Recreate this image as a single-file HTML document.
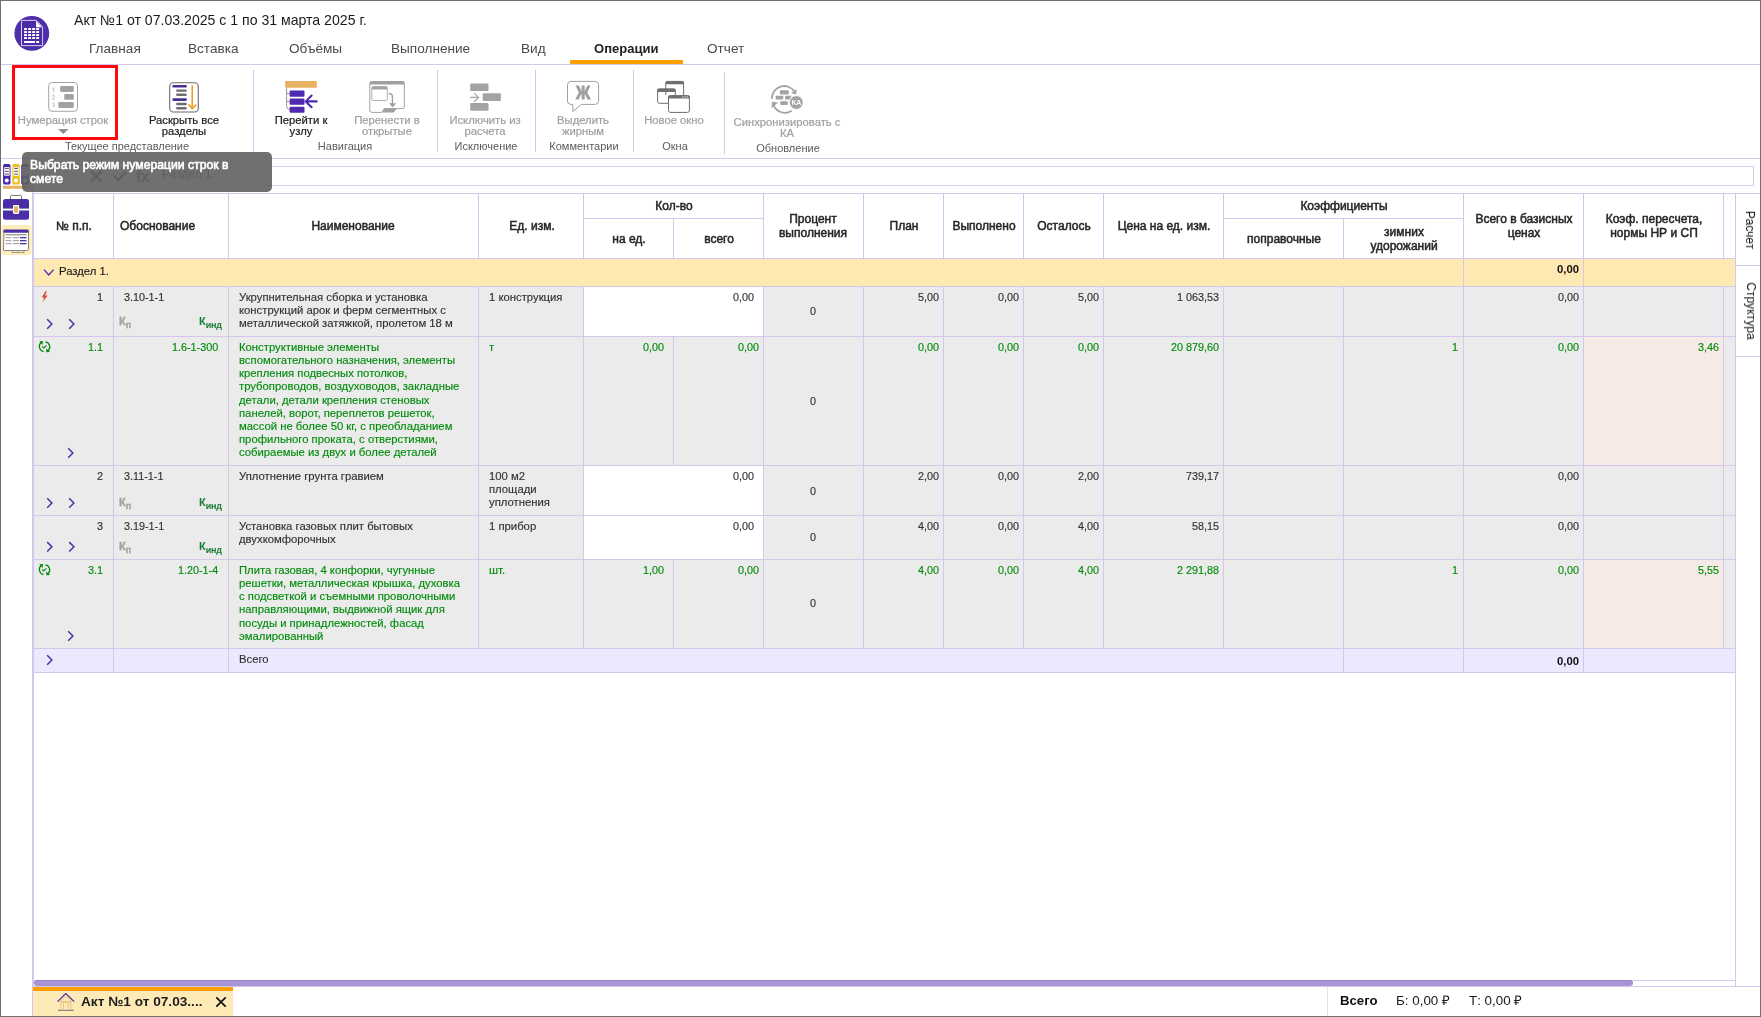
<!DOCTYPE html><html><head><meta charset="utf-8"><style>
html,body{margin:0;padding:0;}
body{width:1761px;height:1017px;position:relative;overflow:hidden;background:#fff;font-family:"Liberation Sans",sans-serif;}
.t{position:absolute;white-space:nowrap;will-change:transform;}
.r{position:absolute;}
svg{position:absolute;overflow:visible;}
</style></head><body>
<svg style="left:0;top:0" width="60" height="60" viewBox="0 0 60 60">
<circle cx="31.8" cy="33.4" r="17.4" fill="#4e2eaa"/>
<path d="M21.5 20.4 H36.4 L42.6 26.8 V45.6 H21.5 Z" fill="#4a2aa6" stroke="#d9d0f0" stroke-width="1"/>
<path d="M36 21 V27.2 H42.2 Z" fill="#fff"/>
<g fill="#fff">
<rect x="24" y="28" width="3" height="2" rx="0.5"/><rect x="28.1" y="28" width="3" height="2" rx="0.5"/><rect x="32.1" y="28" width="3" height="2" rx="0.5"/><rect x="36.1" y="28" width="3" height="2" rx="0.5"/>
<rect x="24" y="31" width="3" height="2" rx="0.5"/><rect x="28.1" y="31" width="3" height="2" rx="0.5"/><rect x="32.1" y="31" width="3" height="2" rx="0.5"/><rect x="36.1" y="31" width="3" height="2" rx="0.5"/>
<rect x="24" y="34" width="3" height="2" rx="0.5"/><rect x="28.1" y="34" width="3" height="2" rx="0.5"/><rect x="32.1" y="34" width="3" height="2" rx="0.5"/><rect x="36.1" y="34" width="3" height="2" rx="0.5"/>
<rect x="24" y="37" width="3" height="2" rx="0.5"/><rect x="28.1" y="37" width="3" height="2" rx="0.5"/><rect x="32.1" y="37" width="3" height="2" rx="0.5"/><rect x="36.1" y="37" width="3" height="2" rx="0.5"/>
<rect x="24" y="41" width="11" height="2" rx="0.5"/><rect x="36.1" y="41" width="3" height="2" rx="0.5"/>
</g></svg>
<div class="t" style="top:12.10px;font-size:14.1px;line-height:17.62px;font-weight:400;color:#1b1b1b;left:74px;">Акт №1 от 07.03.2025 с 1 по 31 марта 2025 г.</div>
<div class="t" style="top:39.79px;font-size:13.6px;line-height:17.0px;font-weight:400;color:#4a4a4a;left:88.5px;">Главная</div>
<div class="t" style="top:39.79px;font-size:13.6px;line-height:17.0px;font-weight:400;color:#4a4a4a;left:188px;">Вставка</div>
<div class="t" style="top:39.79px;font-size:13.6px;line-height:17.0px;font-weight:400;color:#4a4a4a;left:288.5px;">Объёмы</div>
<div class="t" style="top:39.79px;font-size:13.6px;line-height:17.0px;font-weight:400;color:#4a4a4a;left:390.5px;">Выполнение</div>
<div class="t" style="top:39.79px;font-size:13.6px;line-height:17.0px;font-weight:400;color:#4a4a4a;left:520.5px;">Вид</div>
<div class="t" style="top:39.79px;font-size:13.6px;line-height:17.0px;font-weight:400;color:#4a4a4a;left:706.8px;">Отчет</div>
<div class="t" style="top:40.82px;font-size:13.05px;line-height:16.31px;font-weight:700;color:#222;left:593.8px;">Операции</div>
<div class="r" style="left:570px;top:60px;width:113px;height:4px;background:#ff9f00;"></div>
<div class="r" style="left:1px;top:64px;width:1759px;height:1px;background:#d3c7ee;"></div>
<div class="r" style="left:12px;top:65px;width:100px;height:69px;border:3px solid #ff0a0a;"></div>
<div class="t" style="top:113.27px;font-size:11.25px;line-height:14.06px;font-weight:400;color:#a0a0a0;left:-17.0px;width:160px;text-align:center;-webkit-text-stroke:0.22px #a0a0a0;">Нумерация строк</div>
<svg style="left:58px;top:129px" width="11" height="5" viewBox="0 0 11 5"><path d="M0 0H10.5L5.25 5Z" fill="#8d8d8d"/></svg>
<div class="t" style="top:113.37px;font-size:11.25px;line-height:14.06px;font-weight:400;color:#222;left:104.0px;width:160px;text-align:center;-webkit-text-stroke:0.22px #222;">Раскрыть все</div>
<div class="t" style="top:123.97px;font-size:11.25px;line-height:14.06px;font-weight:400;color:#222;left:104.0px;width:160px;text-align:center;-webkit-text-stroke:0.22px #222;">разделы</div>
<div class="t" style="top:139.81px;font-size:11px;line-height:13.75px;font-weight:400;color:#5a5a5a;left:26.5px;width:200px;text-align:center;">Текущее представление</div>
<div class="r" style="left:253px;top:70px;width:1px;height:82px;background:#d3c7ee;"></div>
<div class="t" style="top:113.07px;font-size:11.25px;line-height:14.06px;font-weight:400;color:#222;left:221.0px;width:160px;text-align:center;-webkit-text-stroke:0.22px #222;">Перейти к</div>
<div class="t" style="top:123.67px;font-size:11.25px;line-height:14.06px;font-weight:400;color:#222;left:221.0px;width:160px;text-align:center;-webkit-text-stroke:0.22px #222;">узлу</div>
<div class="t" style="top:113.07px;font-size:11.25px;line-height:14.06px;font-weight:400;color:#a0a0a0;left:307.0px;width:160px;text-align:center;-webkit-text-stroke:0.22px #a0a0a0;">Перенести в</div>
<div class="t" style="top:123.67px;font-size:11.25px;line-height:14.06px;font-weight:400;color:#a0a0a0;left:307.0px;width:160px;text-align:center;-webkit-text-stroke:0.22px #a0a0a0;">открытые</div>
<div class="t" style="top:139.71px;font-size:11px;line-height:13.75px;font-weight:400;color:#5a5a5a;left:245.0px;width:200px;text-align:center;">Навигация</div>
<div class="r" style="left:437px;top:70px;width:1px;height:82px;background:#d3c7ee;"></div>
<div class="t" style="top:113.07px;font-size:11.25px;line-height:14.06px;font-weight:400;color:#a0a0a0;left:405.0px;width:160px;text-align:center;-webkit-text-stroke:0.22px #a0a0a0;">Исключить из</div>
<div class="t" style="top:123.67px;font-size:11.25px;line-height:14.06px;font-weight:400;color:#a0a0a0;left:405.0px;width:160px;text-align:center;-webkit-text-stroke:0.22px #a0a0a0;">расчета</div>
<div class="t" style="top:139.71px;font-size:11px;line-height:13.75px;font-weight:400;color:#5a5a5a;left:386.0px;width:200px;text-align:center;">Исключение</div>
<div class="r" style="left:535px;top:70px;width:1px;height:82px;background:#d3c7ee;"></div>
<div class="t" style="top:113.07px;font-size:11.25px;line-height:14.06px;font-weight:400;color:#a0a0a0;left:503.0px;width:160px;text-align:center;-webkit-text-stroke:0.22px #a0a0a0;">Выделить</div>
<div class="t" style="top:123.67px;font-size:11.25px;line-height:14.06px;font-weight:400;color:#a0a0a0;left:503.0px;width:160px;text-align:center;-webkit-text-stroke:0.22px #a0a0a0;">жирным</div>
<div class="t" style="top:139.71px;font-size:11px;line-height:13.75px;font-weight:400;color:#5a5a5a;left:484.0px;width:200px;text-align:center;">Комментарии</div>
<div class="r" style="left:633px;top:70px;width:1px;height:82px;background:#d3c7ee;"></div>
<div class="t" style="top:113.07px;font-size:11.25px;line-height:14.06px;font-weight:400;color:#a0a0a0;left:593.5px;width:160px;text-align:center;-webkit-text-stroke:0.22px #a0a0a0;">Новое окно</div>
<div class="t" style="top:139.71px;font-size:11px;line-height:13.75px;font-weight:400;color:#5a5a5a;left:574.5px;width:200px;text-align:center;">Окна</div>
<div class="r" style="left:724px;top:72px;width:1px;height:82px;background:#d3c7ee;"></div>
<div class="t" style="top:114.77px;font-size:11.25px;line-height:14.06px;font-weight:400;color:#a0a0a0;left:707.0px;width:160px;text-align:center;-webkit-text-stroke:0.22px #a0a0a0;">Синхронизировать с</div>
<div class="t" style="top:125.67px;font-size:11.25px;line-height:14.06px;font-weight:400;color:#a0a0a0;left:707.0px;width:160px;text-align:center;-webkit-text-stroke:0.22px #a0a0a0;">КА</div>
<div class="t" style="top:141.61px;font-size:11px;line-height:13.75px;font-weight:400;color:#5a5a5a;left:688.0px;width:200px;text-align:center;">Обновление</div>
<div class="r" style="left:1px;top:158px;width:1759px;height:1px;background:#d3c7ee;"></div>
<svg style="left:0;top:0" width="900" height="160" viewBox="0 0 900 160">
<!-- numbering -->
<rect x="48.7" y="82.5" width="28.8" height="28.8" rx="3.2" fill="none" stroke="#9c9c9c" stroke-width="0.9"/>
<rect x="60.1" y="86" width="13.7" height="5.9" rx="1.3" fill="#a2a2a2"/>
<rect x="64.2" y="94.1" width="9.6" height="5.7" rx="1.3" fill="#a2a2a2"/>
<rect x="58.3" y="102" width="15.5" height="5.9" rx="1.3" fill="#a2a2a2"/>
<g fill="none" stroke="#a8a8a8" stroke-width="0.65" stroke-linecap="round" stroke-linejoin="round"><path d="M52.5 88.5 L53.7 87.6 V91.8"/><path d="M52.3 96 Q52.4 95 53.4 95 Q54.5 95 54.4 96 Q54.3 96.8 52.3 99.2 H54.7"/><path d="M52.3 103.2 Q52.8 102.6 53.6 102.7 Q54.5 102.8 54.4 103.7 Q54.2 104.6 53.2 104.6 Q54.7 104.7 54.6 105.7 Q54.4 106.8 53.3 106.8 Q52.6 106.8 52.2 106.3"/></g>
<!-- expand all -->
<rect x="169.7" y="82.8" width="28.6" height="29.2" rx="3.6" fill="none" stroke="#6b6b6f" stroke-width="1.1"/>
<g stroke-linecap="round" stroke-width="2.6">
<path d="M173.6 86.3 H185.6 M173.6 99.6 H185.6" stroke="#47308f"/>
<path d="M177.3 90.6 H185.6 M177.3 94.7 H185.6 M177.3 104 H185.6 M177.3 108.3 H185.6" stroke="#6d6d73" stroke-width="2.4"/>
</g>
<path d="M192.2 85.2 V108.6 M188.5 104.3 L192.2 108.6 L196.2 104.6" fill="none" stroke="#f29b17" stroke-width="1.5"/>
<!-- go to node -->
<rect x="285.1" y="81.1" width="31.8" height="6.7" rx="0.8" fill="#e8b263"/>
<path d="M286.6 87.8 V106 Q286.6 109.5 290 109.6 M286.6 93.5 L289.6 93.5 M286.6 101.5 L289.6 101.5" fill="none" stroke="#8a8a8a" stroke-width="0.9"/>
<rect x="289.6" y="90.4" width="14.9" height="6.3" rx="1" fill="#4f2ab0"/>
<rect x="289.6" y="98.6" width="14.9" height="6.1" rx="1" fill="#4f2ab0"/>
<rect x="289.6" y="106.7" width="14.9" height="6.1" rx="1" fill="#4f2ab0"/>
<path d="M316.7 101.4 H306.5 M311.6 95.6 L305.7 101.4 L311.6 107.2" fill="none" stroke="#4f2ab0" stroke-width="2.1" stroke-linecap="round" stroke-linejoin="round"/>
<!-- move to open -->
<path d="M369.8 84 Q369.8 81.5 372.3 81.5 H402 Q404.3 81.5 404.3 84 V107 Q404.3 108.6 402 108.6 H384.2 L381.6 112.4 H372.3 Q369.8 112.4 369.8 110 Z" fill="none" stroke="#a0a0a0" stroke-width="1"/>
<rect x="369.8" y="81.5" width="34.5" height="3" fill="#a0a0a0"/>
<path d="M382 112.6 L384.6 108.5 H397 L393.6 112.6 Z" fill="#a0a0a0"/>
<path d="M371.8 99 V88.5 Q371.8 86.6 373.8 86.6 H385.3 Q387.3 86.6 387.3 88.5 V99 Q387.3 100.5 385.6 100.5 H373.5 Q371.8 100.5 371.8 99 Z" fill="none" stroke="#a6a6a6" stroke-width="0.9"/>
<rect x="371.8" y="86.6" width="15.5" height="3" rx="1" fill="#a3a3a3"/>
<path d="M389.3 93.8 Q392.4 93.4 392.4 96.8 V104" fill="none" stroke="#a0a0a0" stroke-width="1.4" stroke-linecap="round"/>
<path d="M389 103.2 H396.3 L392.6 107.4 Z" fill="#a0a0a0"/>
<!-- exclude -->
<g fill="#a3a3a3"><rect x="470.2" y="83.5" width="18.3" height="7.6" rx="1.2"/><rect x="482.7" y="93.3" width="18.2" height="7.7" rx="1.2"/><rect x="470.2" y="103.1" width="18.3" height="7.7" rx="1.2"/></g>
<path d="M470.4 97.4 H478.6 M474.5 93.4 L478.6 97.4 L474.5 101.5" fill="none" stroke="#a3a3a3" stroke-width="1.2" stroke-linecap="round" stroke-linejoin="round"/>
<!-- bold comment -->
<path d="M571 81.4 H595.2 Q598.6 81.4 598.6 84.8 V101 Q598.6 104.4 595.2 104.4 H581.3 L572.9 111.6 V104.4 H571 Q567.5 104.4 567.5 101 V84.8 Q567.5 81.4 571 81.4 Z" fill="none" stroke="#a0a0a0" stroke-width="1"/>
<text x="0" y="0" transform="translate(583.1 99.2) scale(0.88 1)" text-anchor="middle" font-family="Liberation Sans" font-weight="bold" font-size="17.8" fill="#a0a0a0" stroke="#a0a0a0" stroke-width="0.9">Ж</text>
<!-- new window -->
<g fill="#fff" stroke="#6e6e6e" stroke-width="1">
<path d="M665.8 95 V83 Q665.8 81.4 667.5 81.4 H682 Q683.6 81.4 683.6 83 V95"/>
</g>
<rect x="665.6" y="81.2" width="18.2" height="3.1" rx="0.8" fill="#6e6e6e"/>
<path d="M657.6 101.5 V90.6 Q657.6 88.9 659.4 88.9 H673.6 Q675.3 88.9 675.3 90.6 V95.5 M668.3 103.3 H659.4 Q657.6 103.3 657.6 101.5" fill="none" stroke="#6e6e6e" stroke-width="1"/>
<rect x="657.4" y="88.8" width="18.1" height="3.1" rx="0.8" fill="#6e6e6e"/>
<path d="M668.5 110.3 V97.3 Q668.5 95.6 670.3 95.6 H687.8 Q689.4 95.6 689.4 97.3 V110.3 Q689.4 112.4 687.3 112.4 H670.6 Q668.5 112.4 668.5 110.3 Z" fill="none" stroke="#6e6e6e" stroke-width="1"/>
<rect x="668.3" y="95.4" width="21.3" height="3.1" rx="0.8" fill="#6e6e6e"/>
<g fill="#fff"><circle cx="682.8" cy="96.9" r="0.6"/><circle cx="685" cy="96.9" r="0.6"/><circle cx="687.2" cy="96.9" r="0.6"/></g>
<!-- sync KA -->
<g fill="none" stroke="#a3a3a3" stroke-width="1.8">
<path d="M771.9 98.8 A12.3 12.3 0 0 1 794.5 91.6"/>
<path d="M791.7 110.7 A12.3 12.3 0 0 1 773.5 105.2"/>
</g>
<path d="M796.9 89.1 L796 94.6 L791 92.9 Z" fill="#a3a3a3"/>
<path d="M771.2 108.2 L772.2 101.7 L778.2 102.6 Z" fill="#a3a3a3"/>
<g fill="#a3a3a3">
<rect x="779.9" y="90.2" width="8.9" height="4.3" rx="0.8"/>
<rect x="775.8" y="95.7" width="7.4" height="3.9" rx="0.6"/>
<path d="M785.2 95.7 H791.6 L789.5 99.6 H785.2 Z"/>
<rect x="780.3" y="101.2" width="7.5" height="3.7" rx="0.6"/>
</g>
<circle cx="796.3" cy="102.5" r="6.9" fill="#a3a3a3" stroke="#fff" stroke-width="0.9"/>
<text x="796.3" y="105" text-anchor="middle" font-family="Liberation Sans" font-weight="700" font-size="7" fill="#fff" letter-spacing="-0.3">KA</text>
</svg>
<div class="r" style="left:0px;top:0px;width:1761px;height:1px;background:#707070;"></div>
<div class="r" style="left:0px;top:1016px;width:1761px;height:1px;background:#707070;"></div>
<div class="r" style="left:0px;top:0px;width:1px;height:1017px;background:#707070;"></div>
<div class="r" style="left:1760px;top:0px;width:1px;height:1017px;background:#707070;"></div>
<div class="r" style="left:32px;top:158px;width:1px;height:858px;background:#d3c7ee;"></div>
<div class="r" style="left:33px;top:193px;width:1px;height:794px;background:#d3c7ee;"></div>
<div class="r" style="left:38.5px;top:165px;width:44px;height:19px;border:1px solid #d6ccef;box-sizing:border-box;"></div>
<div class="r" style="left:158px;top:166px;width:1596px;height:20px;border:1px solid #d6ccef;box-sizing:border-box;"></div>
<div class="t" style="top:166.84px;font-size:12px;line-height:15.0px;font-weight:400;color:#555;left:161.5px;">Раздел 1.</div>
<svg style="left:0;top:0" width="200" height="200" viewBox="0 0 200 200">
<path d="M91.2 171.2 L101.6 181.6 M101.6 171.2 L91.2 181.6" stroke="#5a5a5a" stroke-width="2.6"/>
<path d="M114.3 176 L118.3 180.3 L125.8 171.8" fill="none" stroke="#5a5a5a" stroke-width="2.4"/>
<text x="136" y="181.8" font-family="Liberation Sans" font-weight="700" font-size="16" fill="#5a5a5a" letter-spacing="-0.5">fx</text>
</svg>
<svg style="left:0;top:0" width="40" height="270" viewBox="0 0 40 270">
<rect x="3.1" y="164.1" width="7.4" height="20.4" rx="1.6" fill="#4a27a8"/>
<rect x="12.3" y="164.1" width="7.5" height="20.4" rx="1.6" fill="#ecc01e"/>
<rect x="21.2" y="164.1" width="7.5" height="20.4" rx="1.6" fill="#4a27a8"/>
<g fill="#fff"><rect x="4.2" y="167.1" width="5.4" height="8.6" rx="0.8"/><rect x="13.4" y="167.1" width="5.4" height="8.6" rx="0.8"/><rect x="22.3" y="167.1" width="5.4" height="8.6" rx="0.8"/>
<circle cx="6.8" cy="180.4" r="2"/><circle cx="16" cy="180.4" r="2"/><circle cx="24.9" cy="180.4" r="2"/></g>
<g fill="#3a3a3a"><rect x="5" y="167.9" width="3.8" height="0.9"/><rect x="5" y="170.8" width="3.8" height="0.9"/><rect x="5" y="173.6" width="3.8" height="0.9"/><rect x="14.2" y="167.9" width="3.8" height="0.9"/><rect x="14.2" y="170.8" width="3.8" height="0.9"/><rect x="14.2" y="173.6" width="3.8" height="0.9"/><rect x="23.1" y="167.9" width="3.8" height="0.9"/><rect x="23.1" y="170.8" width="3.8" height="0.9"/><rect x="23.1" y="173.6" width="3.8" height="0.9"/></g>
<rect x="3" y="185.8" width="26" height="3" rx="0.5" fill="#e8b263"/>
<path d="M10.5 199 V196.6 Q10.5 195.4 11.7 195.4 H20.3 Q21.5 195.4 21.5 196.6 V199" fill="none" stroke="#6a6a6a" stroke-width="0.9"/>
<rect x="3" y="199" width="26" height="20.7" rx="2.5" fill="#4b2da5"/>
<rect x="3" y="208.6" width="26" height="1.9" fill="#fff"/>
<rect x="13.6" y="205.6" width="5" height="7.8" rx="0.6" fill="#e8b263" stroke="#fff" stroke-width="1.1"/>
<rect x="1.5" y="225" width="30" height="30" rx="3" fill="#feebb8"/>
<path d="M4 231 H28.5 V248.5 Q28.5 250.5 26.5 250.5 H4 Q3.5 250.5 3.5 249 Z" fill="#fff" stroke="#777" stroke-width="0.9"/>
<rect x="3.5" y="229.5" width="25" height="3.3" rx="1" fill="#4b2da5"/>
<rect x="5.5" y="234.3" width="21" height="1" fill="#777"/>
<g fill="#aaa"><rect x="5.5" y="237" width="6" height="1.2"/><rect x="13" y="237" width="6" height="1.2"/><rect x="5.5" y="240" width="6" height="1.2"/><rect x="13" y="240" width="6" height="1.2"/><rect x="5.5" y="243" width="6" height="1.2"/><rect x="13" y="243" width="6" height="1.2"/></g>
<g fill="#4b2da5"><rect x="20" y="237" width="6.5" height="1.3"/><rect x="20" y="240" width="6.5" height="1.3"/><rect x="20" y="243" width="6.5" height="1.3"/></g>
<path d="M12 250.5 V252.5 H24 V250.5 M18 250.5 V252.5" fill="none" stroke="#888" stroke-width="0.8"/>
</svg>
<div class="r" style="left:34px;top:193px;width:1726px;height:1px;background:#d3c7ee;"></div>
<div class="r" style="left:34px;top:259px;width:1701px;height:27px;background:#fee9b3;"></div>
<div class="r" style="left:34px;top:287px;width:1701px;height:361px;background:#ebebeb;"></div>
<div class="r" style="left:584px;top:287px;width:179px;height:49px;background:#fff;"></div>
<div class="r" style="left:584px;top:466px;width:179px;height:49px;background:#fff;"></div>
<div class="r" style="left:584px;top:516px;width:179px;height:43px;background:#fff;"></div>
<div class="r" style="left:1584px;top:337px;width:139px;height:128px;background:#f5eae6;"></div>
<div class="r" style="left:1584px;top:560px;width:139px;height:88px;background:#f5eae6;"></div>
<div class="r" style="left:34px;top:649px;width:1701px;height:23px;background:#ece8fd;"></div>
<div class="r" style="left:34px;top:258px;width:1701px;height:1px;background:#d3c7ee;"></div>
<div class="r" style="left:34px;top:286px;width:1701px;height:1px;background:#d3c7ee;"></div>
<div class="r" style="left:34px;top:336px;width:1701px;height:1px;background:#d3c7ee;"></div>
<div class="r" style="left:34px;top:465px;width:1701px;height:1px;background:#d3c7ee;"></div>
<div class="r" style="left:34px;top:515px;width:1701px;height:1px;background:#d3c7ee;"></div>
<div class="r" style="left:34px;top:559px;width:1701px;height:1px;background:#d3c7ee;"></div>
<div class="r" style="left:34px;top:648px;width:1701px;height:1px;background:#d3c7ee;"></div>
<div class="r" style="left:34px;top:672px;width:1701px;height:1px;background:#d3c7ee;"></div>
<div class="r" style="left:584px;top:218px;width:179px;height:1px;background:#d3c7ee;"></div>
<div class="r" style="left:1224px;top:218px;width:239px;height:1px;background:#d3c7ee;"></div>
<div class="r" style="left:113px;top:194px;width:1px;height:64px;background:#d3c7ee;"></div>
<div class="r" style="left:113px;top:287px;width:1px;height:361px;background:#d3c7ee;"></div>
<div class="r" style="left:228px;top:194px;width:1px;height:64px;background:#d3c7ee;"></div>
<div class="r" style="left:228px;top:287px;width:1px;height:361px;background:#d3c7ee;"></div>
<div class="r" style="left:478px;top:194px;width:1px;height:64px;background:#d3c7ee;"></div>
<div class="r" style="left:478px;top:287px;width:1px;height:361px;background:#d3c7ee;"></div>
<div class="r" style="left:583px;top:194px;width:1px;height:64px;background:#d3c7ee;"></div>
<div class="r" style="left:583px;top:287px;width:1px;height:361px;background:#d3c7ee;"></div>
<div class="r" style="left:763px;top:194px;width:1px;height:64px;background:#d3c7ee;"></div>
<div class="r" style="left:763px;top:287px;width:1px;height:361px;background:#d3c7ee;"></div>
<div class="r" style="left:863px;top:194px;width:1px;height:64px;background:#d3c7ee;"></div>
<div class="r" style="left:863px;top:287px;width:1px;height:361px;background:#d3c7ee;"></div>
<div class="r" style="left:943px;top:194px;width:1px;height:64px;background:#d3c7ee;"></div>
<div class="r" style="left:943px;top:287px;width:1px;height:361px;background:#d3c7ee;"></div>
<div class="r" style="left:1023px;top:194px;width:1px;height:64px;background:#d3c7ee;"></div>
<div class="r" style="left:1023px;top:287px;width:1px;height:361px;background:#d3c7ee;"></div>
<div class="r" style="left:1103px;top:194px;width:1px;height:64px;background:#d3c7ee;"></div>
<div class="r" style="left:1103px;top:287px;width:1px;height:361px;background:#d3c7ee;"></div>
<div class="r" style="left:1223px;top:194px;width:1px;height:64px;background:#d3c7ee;"></div>
<div class="r" style="left:1223px;top:287px;width:1px;height:361px;background:#d3c7ee;"></div>
<div class="r" style="left:1343px;top:287px;width:1px;height:361px;background:#d3c7ee;"></div>
<div class="r" style="left:1463px;top:194px;width:1px;height:64px;background:#d3c7ee;"></div>
<div class="r" style="left:1463px;top:287px;width:1px;height:361px;background:#d3c7ee;"></div>
<div class="r" style="left:1583px;top:194px;width:1px;height:64px;background:#d3c7ee;"></div>
<div class="r" style="left:1583px;top:287px;width:1px;height:361px;background:#d3c7ee;"></div>
<div class="r" style="left:1723px;top:194px;width:1px;height:64px;background:#d3c7ee;"></div>
<div class="r" style="left:1723px;top:287px;width:1px;height:361px;background:#d3c7ee;"></div>
<div class="r" style="left:673px;top:219px;width:1px;height:39px;background:#d3c7ee;"></div>
<div class="r" style="left:673px;top:337px;width:1px;height:128px;background:#d3c7ee;"></div>
<div class="r" style="left:673px;top:560px;width:1px;height:88px;background:#d3c7ee;"></div>
<div class="r" style="left:1343px;top:219px;width:1px;height:39px;background:#d3c7ee;"></div>
<div class="r" style="left:113px;top:649px;width:1px;height:23px;background:#d3c7ee;"></div>
<div class="r" style="left:228px;top:649px;width:1px;height:23px;background:#d3c7ee;"></div>
<div class="r" style="left:1343px;top:649px;width:1px;height:23px;background:#d3c7ee;"></div>
<div class="r" style="left:1463px;top:649px;width:1px;height:23px;background:#d3c7ee;"></div>
<div class="r" style="left:1583px;top:649px;width:1px;height:23px;background:#d3c7ee;"></div>
<div class="r" style="left:1735px;top:193px;width:1px;height:794px;background:#d3c7ee;"></div>
<div class="r" style="left:1463px;top:259px;width:1px;height:27px;background:#d3c7ee;"></div>
<div class="r" style="left:1583px;top:259px;width:1px;height:27px;background:#d3c7ee;"></div>
<div class="t" style="top:219.34px;font-size:12.0px;line-height:15.0px;font-weight:400;color:#262626;left:-16.0px;width:180px;text-align:center;-webkit-text-stroke:0.5px #262626;">№ п.п.</div>
<div class="t" style="top:219.34px;font-size:12.0px;line-height:15.0px;font-weight:400;color:#262626;left:120.3px;-webkit-text-stroke:0.5px #262626;">Обоснование</div>
<div class="t" style="top:219.34px;font-size:12.0px;line-height:15.0px;font-weight:400;color:#262626;left:263.0px;width:180px;text-align:center;-webkit-text-stroke:0.5px #262626;">Наименование</div>
<div class="t" style="top:219.34px;font-size:12.0px;line-height:15.0px;font-weight:400;color:#262626;left:441.5px;width:180px;text-align:center;-webkit-text-stroke:0.5px #262626;">Ед. изм.</div>
<div class="t" style="top:199.34px;font-size:12.0px;line-height:15.0px;font-weight:400;color:#262626;left:584.0px;width:180px;text-align:center;-webkit-text-stroke:0.5px #262626;">Кол-во</div>
<div class="t" style="top:232.14px;font-size:12.0px;line-height:15.0px;font-weight:400;color:#262626;left:539.0px;width:180px;text-align:center;-webkit-text-stroke:0.5px #262626;">на ед.</div>
<div class="t" style="top:232.14px;font-size:12.0px;line-height:15.0px;font-weight:400;color:#262626;left:629.0px;width:180px;text-align:center;-webkit-text-stroke:0.5px #262626;">всего</div>
<div class="t" style="top:212.34px;font-size:12.0px;line-height:15.0px;font-weight:400;color:#262626;left:723.0px;width:180px;text-align:center;-webkit-text-stroke:0.5px #262626;">Процент</div>
<div class="t" style="top:226.14px;font-size:12.0px;line-height:15.0px;font-weight:400;color:#262626;left:723.0px;width:180px;text-align:center;-webkit-text-stroke:0.5px #262626;">выполнения</div>
<div class="t" style="top:219.34px;font-size:12.0px;line-height:15.0px;font-weight:400;color:#262626;left:814.0px;width:180px;text-align:center;-webkit-text-stroke:0.5px #262626;">План</div>
<div class="t" style="top:219.34px;font-size:12.0px;line-height:15.0px;font-weight:400;color:#262626;left:893.5px;width:180px;text-align:center;-webkit-text-stroke:0.5px #262626;">Выполнено</div>
<div class="t" style="top:219.34px;font-size:12.0px;line-height:15.0px;font-weight:400;color:#262626;left:973.5px;width:180px;text-align:center;-webkit-text-stroke:0.5px #262626;">Осталось</div>
<div class="t" style="top:219.34px;font-size:12.0px;line-height:15.0px;font-weight:400;color:#262626;left:1074.0px;width:180px;text-align:center;-webkit-text-stroke:0.5px #262626;">Цена на ед. изм.</div>
<div class="t" style="top:199.34px;font-size:12.0px;line-height:15.0px;font-weight:400;color:#262626;left:1253.5px;width:180px;text-align:center;-webkit-text-stroke:0.5px #262626;">Коэффициенты</div>
<div class="t" style="top:231.84px;font-size:12.0px;line-height:15.0px;font-weight:400;color:#262626;left:1193.5px;width:180px;text-align:center;-webkit-text-stroke:0.5px #262626;">поправочные</div>
<div class="t" style="top:225.34px;font-size:12.0px;line-height:15.0px;font-weight:400;color:#262626;left:1313.5px;width:180px;text-align:center;-webkit-text-stroke:0.5px #262626;">зимних</div>
<div class="t" style="top:238.84px;font-size:12.0px;line-height:15.0px;font-weight:400;color:#262626;left:1313.5px;width:180px;text-align:center;-webkit-text-stroke:0.5px #262626;">удорожаний</div>
<div class="t" style="top:212.34px;font-size:12.0px;line-height:15.0px;font-weight:400;color:#262626;left:1433.5px;width:180px;text-align:center;-webkit-text-stroke:0.5px #262626;">Всего в базисных</div>
<div class="t" style="top:226.14px;font-size:12.0px;line-height:15.0px;font-weight:400;color:#262626;left:1433.5px;width:180px;text-align:center;-webkit-text-stroke:0.5px #262626;">ценах</div>
<div class="t" style="top:212.34px;font-size:12.0px;line-height:15.0px;font-weight:400;color:#262626;left:1563.5px;width:180px;text-align:center;-webkit-text-stroke:0.5px #262626;">Коэф. пересчета,</div>
<div class="t" style="top:226.14px;font-size:12.0px;line-height:15.0px;font-weight:400;color:#262626;left:1563.5px;width:180px;text-align:center;-webkit-text-stroke:0.5px #262626;">нормы НР и СП</div>
<div class="t" style="top:264.12px;font-size:11.3px;line-height:14.12px;font-weight:400;color:#1a1a1a;left:59.2px;-webkit-text-stroke:0.15px #1a1a1a;">Раздел 1.</div>
<div class="t" style="top:262.42px;font-size:11.3px;line-height:14.12px;font-weight:700;color:#111;right:182.4000000000001px;text-align:right;">0,00</div>
<div class="t" style="top:290.81px;font-size:10.8px;line-height:13.5px;font-weight:400;color:#323232;right:1658px;text-align:right;-webkit-text-stroke:0.15px #323232;">1</div>
<div class="t" style="top:290.81px;font-size:10.8px;line-height:13.5px;font-weight:400;color:#323232;left:124px;-webkit-text-stroke:0.15px #323232;">3.10-1-1</div>
<div class="t" style="top:315.21px;font-size:11px;line-height:13.75px;font-weight:700;color:#a3a3a3;left:119px;-webkit-text-stroke:0.35px #a3a3a3;">К<span style="font-size:9px;position:relative;top:3px;letter-spacing:-0.2px">п</span></div>
<div class="t" style="top:315.21px;font-size:11px;line-height:13.75px;font-weight:700;color:#187b36;right:1539px;text-align:right;">К<span style="font-size:9px;position:relative;top:3px;letter-spacing:-0.25px">инд</span></div>
<div class="t" style="top:289.72px;font-size:11.3px;line-height:14.12px;font-weight:400;color:#323232;left:239px;-webkit-text-stroke:0.15px #323232;">Укрупнительная сборка и установка</div>
<div class="t" style="top:302.92px;font-size:11.3px;line-height:14.12px;font-weight:400;color:#323232;left:239px;-webkit-text-stroke:0.15px #323232;">конструкций арок и ферм сегментных с</div>
<div class="t" style="top:316.12px;font-size:11.3px;line-height:14.12px;font-weight:400;color:#323232;left:239px;-webkit-text-stroke:0.15px #323232;">металлической затяжкой, пролетом 18 м</div>
<div class="t" style="top:289.72px;font-size:11.3px;line-height:14.12px;font-weight:400;color:#323232;left:489.4px;-webkit-text-stroke:0.15px #323232;">1 конструкция</div>
<div class="t" style="top:290.81px;font-size:10.8px;line-height:13.5px;font-weight:400;color:#323232;right:1007.4px;text-align:right;-webkit-text-stroke:0.15px #323232;">0,00</div>
<div class="t" style="top:305.11px;font-size:10.8px;line-height:13.5px;font-weight:400;color:#323232;left:613.0px;width:400px;text-align:center;-webkit-text-stroke:0.15px #323232;">0</div>
<div class="t" style="top:290.81px;font-size:10.8px;line-height:13.5px;font-weight:400;color:#323232;right:821.8px;text-align:right;-webkit-text-stroke:0.15px #323232;">5,00</div>
<div class="t" style="top:290.81px;font-size:10.8px;line-height:13.5px;font-weight:400;color:#323232;right:742.4px;text-align:right;-webkit-text-stroke:0.15px #323232;">0,00</div>
<div class="t" style="top:290.81px;font-size:10.8px;line-height:13.5px;font-weight:400;color:#323232;right:662.2px;text-align:right;-webkit-text-stroke:0.15px #323232;">5,00</div>
<div class="t" style="top:290.81px;font-size:10.8px;line-height:13.5px;font-weight:400;color:#323232;right:542.2px;text-align:right;-webkit-text-stroke:0.15px #323232;">1 063,53</div>
<div class="t" style="top:290.81px;font-size:10.8px;line-height:13.5px;font-weight:400;color:#323232;right:182.4000000000001px;text-align:right;-webkit-text-stroke:0.15px #323232;">0,00</div>
<div class="t" style="top:340.81px;font-size:10.8px;line-height:13.5px;font-weight:400;color:#008c0c;right:1658px;text-align:right;-webkit-text-stroke:0.15px #008c0c;">1.1</div>
<div class="t" style="top:340.81px;font-size:10.8px;line-height:13.5px;font-weight:400;color:#008c0c;right:1542.5px;text-align:right;-webkit-text-stroke:0.15px #008c0c;">1.6-1-300</div>
<div class="t" style="top:339.72px;font-size:11.3px;line-height:14.12px;font-weight:400;color:#008c0c;left:239px;-webkit-text-stroke:0.15px #008c0c;">Конструктивные элементы</div>
<div class="t" style="top:352.92px;font-size:11.3px;line-height:14.12px;font-weight:400;color:#008c0c;left:239px;-webkit-text-stroke:0.15px #008c0c;">вспомогательного назначения, элементы</div>
<div class="t" style="top:366.12px;font-size:11.3px;line-height:14.12px;font-weight:400;color:#008c0c;left:239px;-webkit-text-stroke:0.15px #008c0c;">крепления подвесных потолков,</div>
<div class="t" style="top:379.32px;font-size:11.3px;line-height:14.12px;font-weight:400;color:#008c0c;left:239px;-webkit-text-stroke:0.15px #008c0c;">трубопроводов, воздуховодов, закладные</div>
<div class="t" style="top:392.52px;font-size:11.3px;line-height:14.12px;font-weight:400;color:#008c0c;left:239px;-webkit-text-stroke:0.15px #008c0c;">детали, детали крепления стеновых</div>
<div class="t" style="top:405.72px;font-size:11.3px;line-height:14.12px;font-weight:400;color:#008c0c;left:239px;-webkit-text-stroke:0.15px #008c0c;">панелей, ворот, переплетов решеток,</div>
<div class="t" style="top:418.92px;font-size:11.3px;line-height:14.12px;font-weight:400;color:#008c0c;left:239px;-webkit-text-stroke:0.15px #008c0c;">массой не более 50 кг, с преобладанием</div>
<div class="t" style="top:432.12px;font-size:11.3px;line-height:14.12px;font-weight:400;color:#008c0c;left:239px;-webkit-text-stroke:0.15px #008c0c;">профильного проката, с отверстиями,</div>
<div class="t" style="top:445.32px;font-size:11.3px;line-height:14.12px;font-weight:400;color:#008c0c;left:239px;-webkit-text-stroke:0.15px #008c0c;">собираемые из двух и более деталей</div>
<div class="t" style="top:339.72px;font-size:11.3px;line-height:14.12px;font-weight:400;color:#008c0c;left:489.4px;-webkit-text-stroke:0.15px #008c0c;">т</div>
<div class="t" style="top:340.81px;font-size:10.8px;line-height:13.5px;font-weight:400;color:#008c0c;right:1097.4px;text-align:right;-webkit-text-stroke:0.15px #008c0c;">0,00</div>
<div class="t" style="top:340.81px;font-size:10.8px;line-height:13.5px;font-weight:400;color:#008c0c;right:1002.4px;text-align:right;-webkit-text-stroke:0.15px #008c0c;">0,00</div>
<div class="t" style="top:394.81px;font-size:10.8px;line-height:13.5px;font-weight:400;color:#323232;left:613.0px;width:400px;text-align:center;-webkit-text-stroke:0.15px #323232;">0</div>
<div class="t" style="top:340.81px;font-size:10.8px;line-height:13.5px;font-weight:400;color:#008c0c;right:821.8px;text-align:right;-webkit-text-stroke:0.15px #008c0c;">0,00</div>
<div class="t" style="top:340.81px;font-size:10.8px;line-height:13.5px;font-weight:400;color:#008c0c;right:742.4px;text-align:right;-webkit-text-stroke:0.15px #008c0c;">0,00</div>
<div class="t" style="top:340.81px;font-size:10.8px;line-height:13.5px;font-weight:400;color:#008c0c;right:662.2px;text-align:right;-webkit-text-stroke:0.15px #008c0c;">0,00</div>
<div class="t" style="top:340.81px;font-size:10.8px;line-height:13.5px;font-weight:400;color:#008c0c;right:542.2px;text-align:right;-webkit-text-stroke:0.15px #008c0c;">20 879,60</div>
<div class="t" style="top:340.81px;font-size:10.8px;line-height:13.5px;font-weight:400;color:#008c0c;right:302.79999999999995px;text-align:right;-webkit-text-stroke:0.15px #008c0c;">1</div>
<div class="t" style="top:340.81px;font-size:10.8px;line-height:13.5px;font-weight:400;color:#008c0c;right:182.4000000000001px;text-align:right;-webkit-text-stroke:0.15px #008c0c;">0,00</div>
<div class="t" style="top:340.81px;font-size:10.8px;line-height:13.5px;font-weight:400;color:#008c0c;right:42px;text-align:right;-webkit-text-stroke:0.15px #008c0c;">3,46</div>
<div class="t" style="top:469.91px;font-size:10.8px;line-height:13.5px;font-weight:400;color:#323232;right:1658px;text-align:right;-webkit-text-stroke:0.15px #323232;">2</div>
<div class="t" style="top:469.91px;font-size:10.8px;line-height:13.5px;font-weight:400;color:#323232;left:124px;-webkit-text-stroke:0.15px #323232;">3.11-1-1</div>
<div class="t" style="top:495.51px;font-size:11px;line-height:13.75px;font-weight:700;color:#a3a3a3;left:119px;-webkit-text-stroke:0.35px #a3a3a3;">К<span style="font-size:9px;position:relative;top:3px;letter-spacing:-0.2px">п</span></div>
<div class="t" style="top:495.51px;font-size:11px;line-height:13.75px;font-weight:700;color:#187b36;right:1539px;text-align:right;">К<span style="font-size:9px;position:relative;top:3px;letter-spacing:-0.25px">инд</span></div>
<div class="t" style="top:468.82px;font-size:11.3px;line-height:14.12px;font-weight:400;color:#323232;left:239px;-webkit-text-stroke:0.15px #323232;">Уплотнение грунта гравием</div>
<div class="t" style="top:468.82px;font-size:11.3px;line-height:14.12px;font-weight:400;color:#323232;left:489.4px;-webkit-text-stroke:0.15px #323232;">100 м2</div>
<div class="t" style="top:482.02px;font-size:11.3px;line-height:14.12px;font-weight:400;color:#323232;left:489.4px;-webkit-text-stroke:0.15px #323232;">площади</div>
<div class="t" style="top:495.22px;font-size:11.3px;line-height:14.12px;font-weight:400;color:#323232;left:489.4px;-webkit-text-stroke:0.15px #323232;">уплотнения</div>
<div class="t" style="top:469.91px;font-size:10.8px;line-height:13.5px;font-weight:400;color:#323232;right:1007.4px;text-align:right;-webkit-text-stroke:0.15px #323232;">0,00</div>
<div class="t" style="top:484.61px;font-size:10.8px;line-height:13.5px;font-weight:400;color:#323232;left:613.0px;width:400px;text-align:center;-webkit-text-stroke:0.15px #323232;">0</div>
<div class="t" style="top:469.91px;font-size:10.8px;line-height:13.5px;font-weight:400;color:#323232;right:821.8px;text-align:right;-webkit-text-stroke:0.15px #323232;">2,00</div>
<div class="t" style="top:469.91px;font-size:10.8px;line-height:13.5px;font-weight:400;color:#323232;right:742.4px;text-align:right;-webkit-text-stroke:0.15px #323232;">0,00</div>
<div class="t" style="top:469.91px;font-size:10.8px;line-height:13.5px;font-weight:400;color:#323232;right:662.2px;text-align:right;-webkit-text-stroke:0.15px #323232;">2,00</div>
<div class="t" style="top:469.91px;font-size:10.8px;line-height:13.5px;font-weight:400;color:#323232;right:542.2px;text-align:right;-webkit-text-stroke:0.15px #323232;">739,17</div>
<div class="t" style="top:469.91px;font-size:10.8px;line-height:13.5px;font-weight:400;color:#323232;right:182.4000000000001px;text-align:right;-webkit-text-stroke:0.15px #323232;">0,00</div>
<div class="t" style="top:519.81px;font-size:10.8px;line-height:13.5px;font-weight:400;color:#323232;right:1658px;text-align:right;-webkit-text-stroke:0.15px #323232;">3</div>
<div class="t" style="top:519.81px;font-size:10.8px;line-height:13.5px;font-weight:400;color:#323232;left:124px;-webkit-text-stroke:0.15px #323232;">3.19-1-1</div>
<div class="t" style="top:539.81px;font-size:11px;line-height:13.75px;font-weight:700;color:#a3a3a3;left:119px;-webkit-text-stroke:0.35px #a3a3a3;">К<span style="font-size:9px;position:relative;top:3px;letter-spacing:-0.2px">п</span></div>
<div class="t" style="top:539.81px;font-size:11px;line-height:13.75px;font-weight:700;color:#187b36;right:1539px;text-align:right;">К<span style="font-size:9px;position:relative;top:3px;letter-spacing:-0.25px">инд</span></div>
<div class="t" style="top:518.72px;font-size:11.3px;line-height:14.12px;font-weight:400;color:#323232;left:239px;-webkit-text-stroke:0.15px #323232;">Установка газовых плит бытовых</div>
<div class="t" style="top:531.92px;font-size:11.3px;line-height:14.12px;font-weight:400;color:#323232;left:239px;-webkit-text-stroke:0.15px #323232;">двухкомфорочных</div>
<div class="t" style="top:518.72px;font-size:11.3px;line-height:14.12px;font-weight:400;color:#323232;left:489.4px;-webkit-text-stroke:0.15px #323232;">1 прибор</div>
<div class="t" style="top:519.81px;font-size:10.8px;line-height:13.5px;font-weight:400;color:#323232;right:1007.4px;text-align:right;-webkit-text-stroke:0.15px #323232;">0,00</div>
<div class="t" style="top:531.31px;font-size:10.8px;line-height:13.5px;font-weight:400;color:#323232;left:613.0px;width:400px;text-align:center;-webkit-text-stroke:0.15px #323232;">0</div>
<div class="t" style="top:519.81px;font-size:10.8px;line-height:13.5px;font-weight:400;color:#323232;right:821.8px;text-align:right;-webkit-text-stroke:0.15px #323232;">4,00</div>
<div class="t" style="top:519.81px;font-size:10.8px;line-height:13.5px;font-weight:400;color:#323232;right:742.4px;text-align:right;-webkit-text-stroke:0.15px #323232;">0,00</div>
<div class="t" style="top:519.81px;font-size:10.8px;line-height:13.5px;font-weight:400;color:#323232;right:662.2px;text-align:right;-webkit-text-stroke:0.15px #323232;">4,00</div>
<div class="t" style="top:519.81px;font-size:10.8px;line-height:13.5px;font-weight:400;color:#323232;right:542.2px;text-align:right;-webkit-text-stroke:0.15px #323232;">58,15</div>
<div class="t" style="top:519.81px;font-size:10.8px;line-height:13.5px;font-weight:400;color:#323232;right:182.4000000000001px;text-align:right;-webkit-text-stroke:0.15px #323232;">0,00</div>
<div class="t" style="top:563.81px;font-size:10.8px;line-height:13.5px;font-weight:400;color:#008c0c;right:1658px;text-align:right;-webkit-text-stroke:0.15px #008c0c;">3.1</div>
<div class="t" style="top:563.81px;font-size:10.8px;line-height:13.5px;font-weight:400;color:#008c0c;right:1542.5px;text-align:right;-webkit-text-stroke:0.15px #008c0c;">1.20-1-4</div>
<div class="t" style="top:562.72px;font-size:11.3px;line-height:14.12px;font-weight:400;color:#008c0c;left:239px;-webkit-text-stroke:0.15px #008c0c;">Плита газовая, 4 конфорки, чугунные</div>
<div class="t" style="top:575.92px;font-size:11.3px;line-height:14.12px;font-weight:400;color:#008c0c;left:239px;-webkit-text-stroke:0.15px #008c0c;">решетки, металлическая крышка, духовка</div>
<div class="t" style="top:589.12px;font-size:11.3px;line-height:14.12px;font-weight:400;color:#008c0c;left:239px;-webkit-text-stroke:0.15px #008c0c;">с подсветкой и съемными проволочными</div>
<div class="t" style="top:602.32px;font-size:11.3px;line-height:14.12px;font-weight:400;color:#008c0c;left:239px;-webkit-text-stroke:0.15px #008c0c;">направляющими, выдвижной ящик для</div>
<div class="t" style="top:615.52px;font-size:11.3px;line-height:14.12px;font-weight:400;color:#008c0c;left:239px;-webkit-text-stroke:0.15px #008c0c;">посуды и принадлежностей, фасад</div>
<div class="t" style="top:628.72px;font-size:11.3px;line-height:14.12px;font-weight:400;color:#008c0c;left:239px;-webkit-text-stroke:0.15px #008c0c;">эмалированный</div>
<div class="t" style="top:562.72px;font-size:11.3px;line-height:14.12px;font-weight:400;color:#008c0c;left:489.4px;-webkit-text-stroke:0.15px #008c0c;">шт.</div>
<div class="t" style="top:563.81px;font-size:10.8px;line-height:13.5px;font-weight:400;color:#008c0c;right:1097.4px;text-align:right;-webkit-text-stroke:0.15px #008c0c;">1,00</div>
<div class="t" style="top:563.81px;font-size:10.8px;line-height:13.5px;font-weight:400;color:#008c0c;right:1002.4px;text-align:right;-webkit-text-stroke:0.15px #008c0c;">0,00</div>
<div class="t" style="top:597.41px;font-size:10.8px;line-height:13.5px;font-weight:400;color:#323232;left:613.0px;width:400px;text-align:center;-webkit-text-stroke:0.15px #323232;">0</div>
<div class="t" style="top:563.81px;font-size:10.8px;line-height:13.5px;font-weight:400;color:#008c0c;right:821.8px;text-align:right;-webkit-text-stroke:0.15px #008c0c;">4,00</div>
<div class="t" style="top:563.81px;font-size:10.8px;line-height:13.5px;font-weight:400;color:#008c0c;right:742.4px;text-align:right;-webkit-text-stroke:0.15px #008c0c;">0,00</div>
<div class="t" style="top:563.81px;font-size:10.8px;line-height:13.5px;font-weight:400;color:#008c0c;right:662.2px;text-align:right;-webkit-text-stroke:0.15px #008c0c;">4,00</div>
<div class="t" style="top:563.81px;font-size:10.8px;line-height:13.5px;font-weight:400;color:#008c0c;right:542.2px;text-align:right;-webkit-text-stroke:0.15px #008c0c;">2 291,88</div>
<div class="t" style="top:563.81px;font-size:10.8px;line-height:13.5px;font-weight:400;color:#008c0c;right:302.79999999999995px;text-align:right;-webkit-text-stroke:0.15px #008c0c;">1</div>
<div class="t" style="top:563.81px;font-size:10.8px;line-height:13.5px;font-weight:400;color:#008c0c;right:182.4000000000001px;text-align:right;-webkit-text-stroke:0.15px #008c0c;">0,00</div>
<div class="t" style="top:563.81px;font-size:10.8px;line-height:13.5px;font-weight:400;color:#008c0c;right:42px;text-align:right;-webkit-text-stroke:0.15px #008c0c;">5,55</div>
<div class="t" style="top:652.22px;font-size:11.3px;line-height:14.12px;font-weight:400;color:#323232;left:239px;-webkit-text-stroke:0.15px #323232;">Всего</div>
<div class="t" style="top:653.52px;font-size:11.3px;line-height:14.12px;font-weight:700;color:#111;right:182.4000000000001px;text-align:right;">0,00</div>
<svg style="left:0;top:0" width="1761" height="1017" viewBox="0 0 1761 1017"><path d="M44.0 269.6 L48.8 274.90000000000003 L53.599999999999994 269.6" fill="none" stroke="#4a2fa8" stroke-width="1.35"/><path d="M45.5 291.2 L41.8 297.6 H44.3 L42.5 302.3 L47.6 295.4 H45 L46.9 291.2 Z" fill="#d8462b"/><path d="M47.2 319.3 L51.900000000000006 324 L47.2 328.7" fill="none" stroke="#4a2fa8" stroke-width="1.5"/><path d="M69.2 319.3 L73.9 324 L69.2 328.7" fill="none" stroke="#4a2fa8" stroke-width="1.5"/><g transform="translate(0.0,0.19999999999998863)"><g fill="none" stroke="#008c0c" stroke-width="1.25"><path d="M43.6 351.3 A5.05 5.05 0 0 1 41.2 342.4"/><path d="M45.4 341.7 A5.05 5.05 0 0 1 47.9 350.6"/><path d="M42.2 346.2 L43.7 347.8 L46.6 345.1" stroke-width="1.15"/></g><g fill="#008c0c"><path d="M39.3 341.1 L43 340.9 L42.5 344.7 Z"/><path d="M46.1 348.3 L46.4 352.1 L50.1 351.8 Z"/></g></g><path d="M68.2 448.3 L72.9 453 L68.2 457.7" fill="none" stroke="#4a2fa8" stroke-width="1.5"/><path d="M47.2 498.3 L51.900000000000006 503 L47.2 507.7" fill="none" stroke="#4a2fa8" stroke-width="1.5"/><path d="M69.2 498.3 L73.9 503 L69.2 507.7" fill="none" stroke="#4a2fa8" stroke-width="1.5"/><path d="M47.2 542.0999999999999 L51.900000000000006 546.8 L47.2 551.5" fill="none" stroke="#4a2fa8" stroke-width="1.5"/><path d="M69.2 542.0999999999999 L73.9 546.8 L69.2 551.5" fill="none" stroke="#4a2fa8" stroke-width="1.5"/><g transform="translate(0.0,223.20000000000005)"><g fill="none" stroke="#008c0c" stroke-width="1.25"><path d="M43.6 351.3 A5.05 5.05 0 0 1 41.2 342.4"/><path d="M45.4 341.7 A5.05 5.05 0 0 1 47.9 350.6"/><path d="M42.2 346.2 L43.7 347.8 L46.6 345.1" stroke-width="1.15"/></g><g fill="#008c0c"><path d="M39.3 341.1 L43 340.9 L42.5 344.7 Z"/><path d="M46.1 348.3 L46.4 352.1 L50.1 351.8 Z"/></g></g><path d="M68.2 631.3 L72.9 636 L68.2 640.7" fill="none" stroke="#4a2fa8" stroke-width="1.5"/><path d="M47.2 655.3 L51.900000000000006 660 L47.2 664.7" fill="none" stroke="#4a2fa8" stroke-width="1.5"/></svg>
<div class="r" style="left:1736px;top:265px;width:24px;height:1px;background:#d3c7ee;"></div>
<div class="r" style="left:1736px;top:356px;width:24px;height:1px;background:#d3c7ee;"></div>
<div class="t" style="left:1749.6px;top:229.6px;font-size:12.1px;line-height:14px;color:#1a1a1a;transform:translate(-50%,-50%) rotate(90deg);">Расчет</div>
<div class="t" style="left:1750.5px;top:310.6px;font-size:12.1px;line-height:14px;color:#1a1a1a;transform:translate(-50%,-50%) rotate(90deg);">Структура</div>
<div class="r" style="left:1633px;top:980px;width:102px;height:1px;background:#d3c7ee;"></div>
<div class="r" style="left:34px;top:980px;width:1599px;height:6px;border-radius:3px;background:#a896d3;box-shadow:inset 0 1px 0 #9582c9;"></div>
<div class="r" style="left:234px;top:986px;width:1526px;height:1px;background:#d3c7ee;"></div>
<div class="r" style="left:34px;top:986px;width:200px;height:1px;background:#d3c7ee;"></div>
<div class="r" style="left:33px;top:987px;width:200px;height:4px;background:#ff9f00;"></div>
<div class="r" style="left:33px;top:991px;width:200px;height:25px;background:#feeab6;"></div>
<svg style="left:0;top:0" width="240" height="1017" viewBox="0 0 240 1017">
<path d="M57.5 1001.6 L65.8 993.6 L74.2 1001.6" fill="none" stroke="#4b2da5" stroke-width="1.3"/>
<g fill="none" stroke="#e9c485" stroke-width="1"><path d="M60 1001.5 L65.8 996.5 L71.6 1001.5 Z"/><path d="M60 1002.2 H71.6"/><path d="M60.8 1002.5 V1009 M63.5 1002.5 V1009 M68.1 1002.5 V1009 M70.8 1002.5 V1009"/></g>
<path d="M58 1010.3 H73.8" stroke="#777" stroke-width="1.1"/>
<path d="M216.3 997.4 L225.7 1006.6 M225.7 997.4 L216.3 1006.6" stroke="#111" stroke-width="1.7"/>
</svg>
<div class="t" style="top:992.54px;font-size:13.65px;line-height:17.06px;font-weight:700;color:#1e1e1e;left:81.1px;">Акт №1 от 07.03....</div>
<div class="r" style="left:1327px;top:987px;width:1px;height:29px;background:#e2e2e2;"></div>
<div class="t" style="top:993.18px;font-size:13.2px;line-height:16.5px;font-weight:700;color:#111;left:1340.2px;">Всего</div>
<div class="t" style="top:992.78px;font-size:13.4px;line-height:16.75px;font-weight:400;color:#1a1a1a;left:1395.9px;">Б: 0,00 ₽</div>
<div class="t" style="top:992.78px;font-size:13.4px;line-height:16.75px;font-weight:400;color:#1a1a1a;left:1469.2px;">Т: 0,00 ₽</div>
<div class="r" style="left:22px;top:152px;width:250px;height:39.5px;border-radius:5px;background:rgba(96,96,96,0.9);"></div>
<div class="t" style="top:158.35px;font-size:12.2px;line-height:15.25px;font-weight:400;color:#fff;left:29.9px;-webkit-text-stroke:0.6px #fff;">Выбрать режим нумерации строк в</div>
<div class="t" style="top:172.35px;font-size:12.2px;line-height:15.25px;font-weight:400;color:#fff;left:29.9px;-webkit-text-stroke:0.6px #fff;">смете</div>
</body></html>
